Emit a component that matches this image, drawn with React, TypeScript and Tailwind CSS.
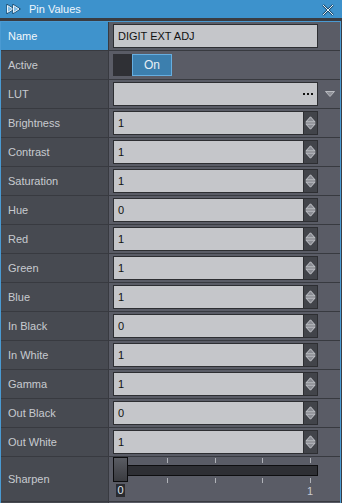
import React from "react";

const rows = [
  { label: "Brightness", value: "1" },
  { label: "Contrast", value: "1" },
  { label: "Saturation", value: "1" },
  { label: "Hue", value: "0" },
  { label: "Red", value: "1" },
  { label: "Green", value: "1" },
  { label: "Blue", value: "1" },
  { label: "In Black", value: "0" },
  { label: "In White", value: "1" },
  { label: "Gamma", value: "1" },
  { label: "Out Black", value: "0" },
  { label: "Out White", value: "1" },
];

function Row({
  label,
  children,
  selected,
  tall,
}: {
  label: string;
  children?: React.ReactNode;
  selected?: boolean;
  tall?: boolean;
}) {
  return (
    <div className={`flex border-b border-[#383a40] ${tall ? "h-[45px]" : "h-[29px]"}`}>
      <div
        className={`w-[108px] shrink-0 border-r border-[#383a40] pl-[7px] flex items-center ${
          selected ? "bg-[#3f93cc] text-[#f2f7fb]" : "bg-[#474a51] text-[#c8cad0]"
        }`}
      >
        {label}
      </div>
      <div className="flex-1 bg-[#5a5c66] flex items-center pl-[4px]">{children}</div>
    </div>
  );
}

function Spinner() {
  return (
    <div className="w-[14px] shrink-0 h-full bg-[#42444a] border-y border-r border-[#2d2e32] flex items-center justify-center">
      <svg width="11" height="14" viewBox="0 0 11 14" className="shrink-0 block">
        <polygon points="5.5,0.8 10,5.8 1,5.8" fill="#8a8c93" stroke="#c4c6cb" strokeWidth="1" strokeLinejoin="round" />
        <line x1="0.5" y1="7" x2="10.5" y2="7" stroke="#c4c6cb" strokeWidth="1" />
        <polygon points="1,8.2 10,8.2 5.5,13.2" fill="#8a8c93" stroke="#c4c6cb" strokeWidth="1" strokeLinejoin="round" />
      </svg>
    </div>
  );
}

function NumInput({ value }: { value: string }) {
  return (
    <div className="flex w-[205px] h-[24px]">
      <div className="flex-1 bg-[#c5c6ca] border border-[#2d2e32] pl-[4px] flex items-center text-[#111]">
        {value}
      </div>
      <Spinner />
    </div>
  );
}

export default function App() {
  return (
    <div className="w-[342px] h-[503px] overflow-hidden bg-[#3a3c42] font-['Liberation_Sans',Arial,sans-serif] text-[11px] leading-none">
      {/* Title bar */}
      <div className="h-[18px] bg-[#3d92cc] flex items-center relative">
        <svg width="16" height="10" viewBox="0 0 16 10" className="ml-[6px]">
          <polygon points="1.5,1.5 7,5 1.5,8.5" fill="#3d92cc" stroke="#1d4a6b" strokeWidth="2.2" />
          <polygon points="1.5,1.5 7,5 1.5,8.5" fill="#7fbbe4" stroke="#eaf5fd" strokeWidth="1" />
          <polygon points="7.5,1.5 13,5 7.5,8.5" fill="#3d92cc" stroke="#1d4a6b" strokeWidth="2.2" />
          <polygon points="7.5,1.5 13,5 7.5,8.5" fill="#7fbbe4" stroke="#eaf5fd" strokeWidth="1" />
        </svg>
        <span className="ml-[7px] text-[#eef6fc]">Pin Values</span>
        <svg width="12" height="12" viewBox="0 0 12 12" className="absolute left-[322px] top-[4px]">
          <path d="M1 1 L11 11 M11 1 L1 11" stroke="#1d4a6b" strokeWidth="2.4" />
          <path d="M1 1 L11 11 M11 1 L1 11" stroke="#e6f3fc" strokeWidth="1" />
        </svg>
      </div>

      {/* Panel */}
      <div className="mt-[3px] w-[341px] border-l border-t border-r border-[#4a9ad2]">
        <Row label="Name" selected>
          <div className="w-[205px] h-[24px] bg-[#c5c6ca] border border-[#2d2e32] pl-[4px] flex items-center text-[#111]">
            DIGIT EXT ADJ
          </div>
        </Row>
        <Row label="Active">
          <div className="flex h-[22px] w-[59px]">
            <div className="w-[19px] bg-[#2f3035]" />
            <div className="flex-1 bg-[#3c7fae] border border-[#66aee0] flex items-center justify-center text-[#e8eff5] text-[12px]">
              On
            </div>
          </div>
        </Row>
        <Row label="LUT">
          <div className="w-[205px] h-[24px] bg-[#c5c6ca] border border-[#2d2e32] flex items-center justify-end pr-[4px]">
            <div className="flex gap-[2px]">
              <div className="w-[2px] h-[2px] bg-[#111]" />
              <div className="w-[2px] h-[2px] bg-[#111]" />
              <div className="w-[2px] h-[2px] bg-[#111]" />
            </div>
          </div>
          <svg width="10" height="6" viewBox="0 0 10 6" className="ml-[7px]">
            <polygon points="0.5,0.5 9.5,0.5 5,5.5" fill="#8f9198" stroke="#b8bac0" strokeWidth="1" />
          </svg>
        </Row>
        {rows.map((r) => (
          <Row key={r.label} label={r.label}>
            <NumInput value={r.value} />
          </Row>
        ))}
        <Row label="Sharpen" tall>
          <div className="relative w-[205px] h-[44px] self-start">
            <svg width="205" height="26" viewBox="0 0 205 26" className="absolute left-0 top-0">
              {[54, 102, 149, 197].map((x) => (
                <g key={x}>
                  <line x1={x + 0.5} y1="1" x2={x + 0.5} y2="6" stroke="#b0b2b8" strokeWidth="1" />
                  <line x1={x + 0.5} y1="21" x2={x + 0.5} y2="26" stroke="#b0b2b8" strokeWidth="1" />
                </g>
              ))}
              <rect x="14.5" y="8.5" width="190" height="10" fill="#2e2f34" stroke="#0e0e10" strokeWidth="1" />
            </svg>
            <div className="absolute left-0 top-0 w-[15px] h-[25px] border border-[#0c0c0e] bg-gradient-to-b from-[#5a5c63] to-[#3a3b40]" />
            <div className="absolute left-[3px] top-[27px] w-[9px] h-[13px] bg-[#2a2b30] flex items-center justify-center text-[#dfe6f0]">
              0
            </div>
            <div className="absolute left-[194px] top-[29px] text-[#c8cad0]">1</div>
          </div>
        </Row>
        <Row label="" />
      </div>
    </div>
  );
}
